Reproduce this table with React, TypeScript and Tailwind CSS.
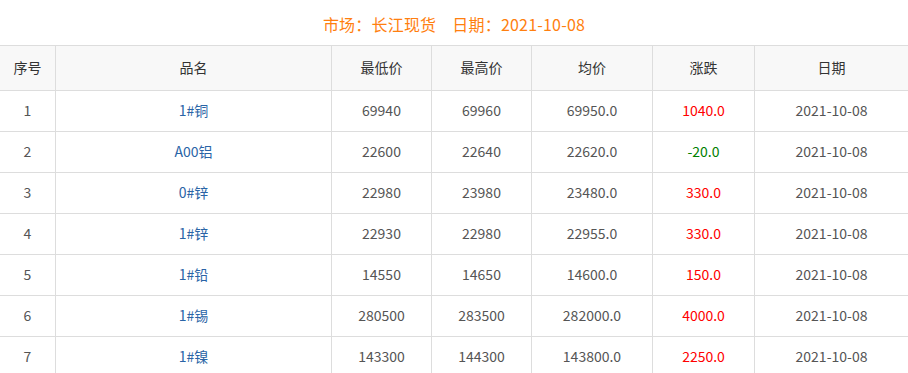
const rows = [
  { id: 1, name: "1#铜", low: "69940", high: "69960", avg: "69950.0", change: "1040.0", date: "2021-10-08" },
  { id: 2, name: "A00铝", low: "22600", high: "22640", avg: "22620.0", change: "-20.0", date: "2021-10-08" },
  { id: 3, name: "0#锌", low: "22980", high: "23980", avg: "23480.0", change: "330.0", date: "2021-10-08" },
  { id: 4, name: "1#锌", low: "22930", high: "22980", avg: "22955.0", change: "330.0", date: "2021-10-08" },
  { id: 5, name: "1#铅", low: "14550", high: "14650", avg: "14600.0", change: "150.0", date: "2021-10-08" },
  { id: 6, name: "1#锡", low: "280500", high: "283500", avg: "282000.0", change: "4000.0", date: "2021-10-08" },
  { id: 7, name: "1#镍", low: "143300", high: "144300", avg: "143800.0", change: "2250.0", date: "2021-10-08" },
];

const headers = ["序号", "品名", "最低价", "最高价", "均价", "涨跌", "日期"];

const grid = "grid grid-cols-[55px_276px_100px_100px_121px_102px_1fr]";

export default function App() {
  return (
    <div
      className="w-[908px] bg-white text-[14px]"
      style={{ fontFamily: '"Noto Sans CJK SC", "Noto Sans", sans-serif' }}
    >
      <div className="flex h-[45px] items-center justify-center pt-[2px] text-[16px] tracking-[0.2px] text-[#ff7f0f]">
        <span>市场：长江现货</span>
        <span className="ml-[16px]">日期：2021-10-08</span>
      </div>

      <div className={`${grid} h-[46px] border-y border-[#dddddd] bg-[#f8f8f8] text-[#333]`}>
        {headers.map((h, i) => (
          <div
            key={h}
            className={`flex items-center justify-center pb-[1px] ${i > 0 ? "border-l border-[#dddddd]" : ""}`}
          >
            {h}
          </div>
        ))}
      </div>

      {rows.map((r) => {
        const up = !r.change.startsWith("-");
        const cell = "flex items-center justify-center pb-[2px]";
        return (
          <div key={r.id} className={`${grid} h-[41px] border-b border-[#dddddd] text-[#555]`}>
            <div className={cell}>{r.id}</div>
            <div className={`${cell} border-l border-[#dddddd] text-[#2a64a6]`}>{r.name}</div>
            <div className={`${cell} border-l border-[#dddddd]`}>{r.low}</div>
            <div className={`${cell} border-l border-[#dddddd]`}>{r.high}</div>
            <div className={`${cell} border-l border-[#dddddd]`}>{r.avg}</div>
            <div
              className={`${cell} border-l border-[#dddddd] ${up ? "text-[#ff0000]" : "text-[#008000]"}`}
            >
              {r.change}
            </div>
            <div className={`${cell} border-l border-[#dddddd]`}>{r.date}</div>
          </div>
        );
      })}
    </div>
  );
}
